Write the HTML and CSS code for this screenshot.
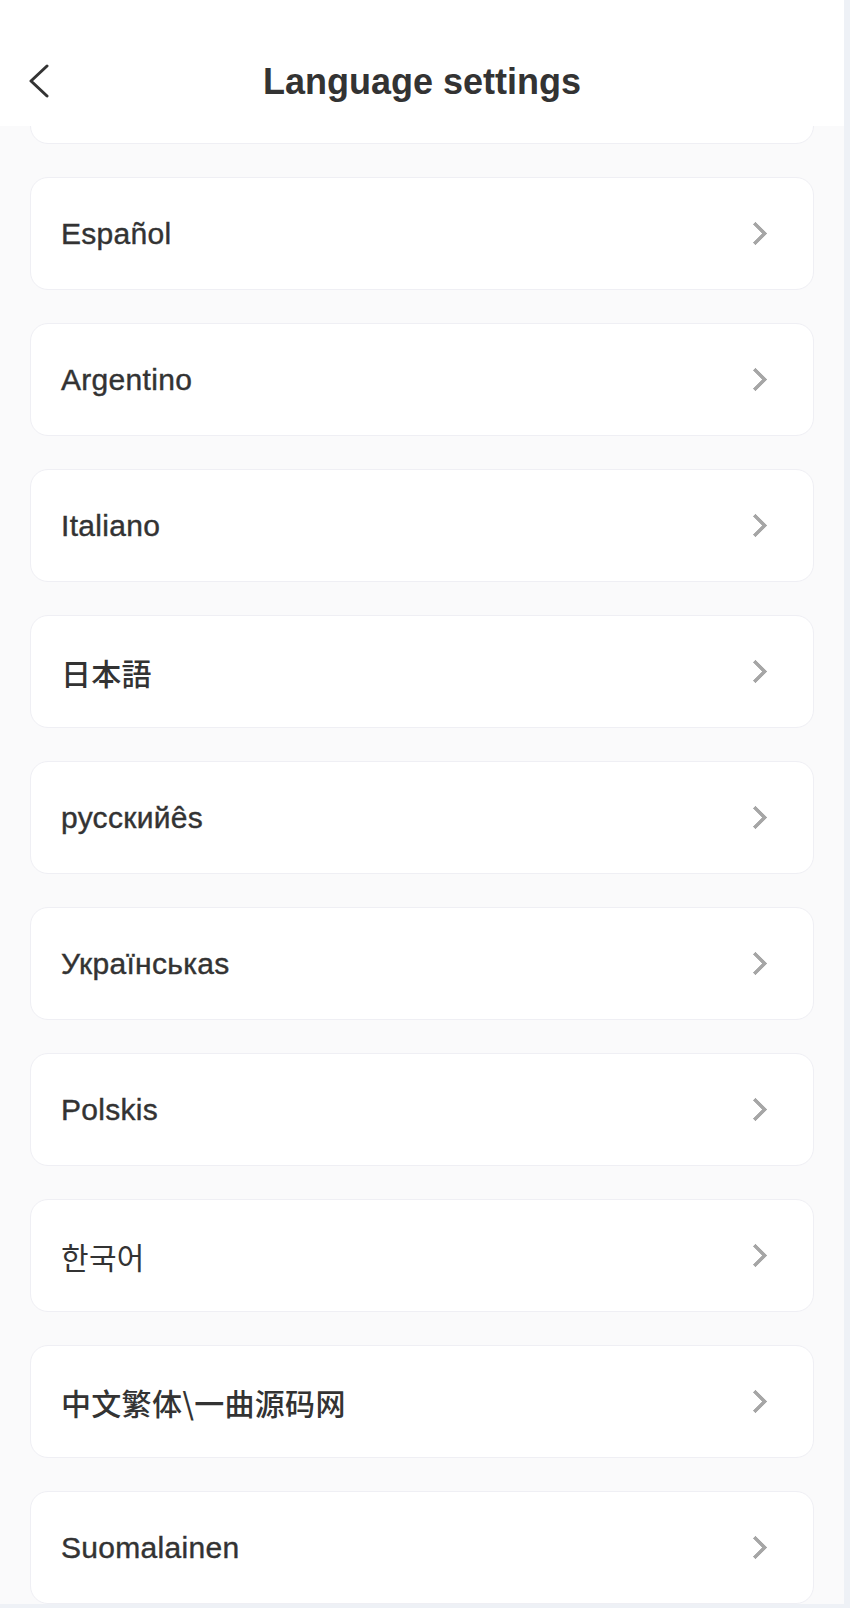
FILE: index.html
```html
<!DOCTYPE html>
<html lang="en">
<head>
  <meta charset="UTF-8">
  <meta name="viewport" content="width=device-width, initial-scale=1.0">
  <title>Language settings</title>
  <link rel="stylesheet" href="styles.css">
</head>
<body>

  <div class="screen">
    <header class="nav-bar">
      <button class="back-btn" type="button" aria-label="Back">
        <svg width="22" height="34" viewBox="0 0 22 34">
          <path d="M19 2 L3 17 L19 32" fill="none" stroke="#333" stroke-width="3" stroke-linecap="round" stroke-linejoin="round"/>
        </svg>
      </button>
      <h1>Language settings</h1>
    </header>

    <ul class="lang-list">
      <li class="lang-item"><span>English</span><i class="arrow"></i></li>
      <li class="lang-item"><span>Español</span><i class="arrow"></i></li>
      <li class="lang-item"><span>Argentino</span><i class="arrow"></i></li>
      <li class="lang-item"><span>Italiano</span><i class="arrow"></i></li>
      <li class="lang-item"><span lang="ja">日本語</span><i class="arrow"></i></li>
      <li class="lang-item"><span>русскийês</span><i class="arrow"></i></li>
      <li class="lang-item"><span>Українськаs</span><i class="arrow"></i></li>
      <li class="lang-item"><span>Polskis</span><i class="arrow"></i></li>
      <li class="lang-item"><span lang="ko" class="light">한국어</span><i class="arrow"></i></li>
      <li class="lang-item"><span lang="zh-TW">中文繁体\一曲源码网</span><i class="arrow"></i></li>
      <li class="lang-item"><span>Suomalainen</span><i class="arrow"></i></li>
    </ul>
  </div>

</body>
</html>
```

FILE: styles.css
```css
body {
  margin: 0;
  background: #eef1f6;
  font-family: "Liberation Sans", "Noto Sans CJK SC", Arial, sans-serif;
  color: #333;
}
.screen {
  position: relative;
  width: 844px;
  height: 1604px;
  overflow: hidden;
  background: #fafafb;
}

/* top bar sits over the scrolled list */
.nav-bar {
  position: absolute;
  left: 0; top: 0;
  width: 100%;
  height: 126px;
  box-sizing: border-box;
  padding-top: 64px;
  background: #fff;
  z-index: 10;
}
.nav-bar h1 {
  margin: 0;
  text-align: center;
  font-size: 36px;
  line-height: 36px;
  font-weight: bold;
  color: #333;
}
.back-btn {
  position: absolute;
  left: 28px; top: 64px;
  padding: 0;
  border: none;
  background: transparent;
  cursor: pointer;
}
.back-btn svg { display: block; }

.lang-list {
  list-style: none;
  margin: 0;
  padding: 31px 30px 0;
  display: flex;
  flex-direction: column;
  gap: 33px;
}
.lang-item {
  display: flex;
  align-items: center;
  justify-content: space-between;
  height: 113px;
  box-sizing: border-box;
  padding: 0 49px 0 30px;
  background: #fff;
  border: 1px solid #efeff4;
  border-radius: 18px;
  font-size: 30px;
  letter-spacing: 0.3px;
  -webkit-text-stroke: 0.4px #333;
  cursor: pointer;
}
.lang-item span[lang="ja"] { font-family: "Noto Sans CJK JP", sans-serif; font-weight: 500; -webkit-text-stroke: 0; }
.lang-item span[lang="zh-TW"] { font-family: "Noto Sans CJK TC", sans-serif; font-weight: 500; -webkit-text-stroke: 0; }
.lang-item .light { font-family: "Noto Sans CJK KR", sans-serif; font-weight: 400; -webkit-text-stroke: 0; }

.arrow {
  width: 13px;
  height: 13px;
  border-top: 4px solid #a6a6a6;
  border-right: 4px solid #a6a6a6;
  border-radius: 1px;
  transform: rotate(45deg);
}
```
